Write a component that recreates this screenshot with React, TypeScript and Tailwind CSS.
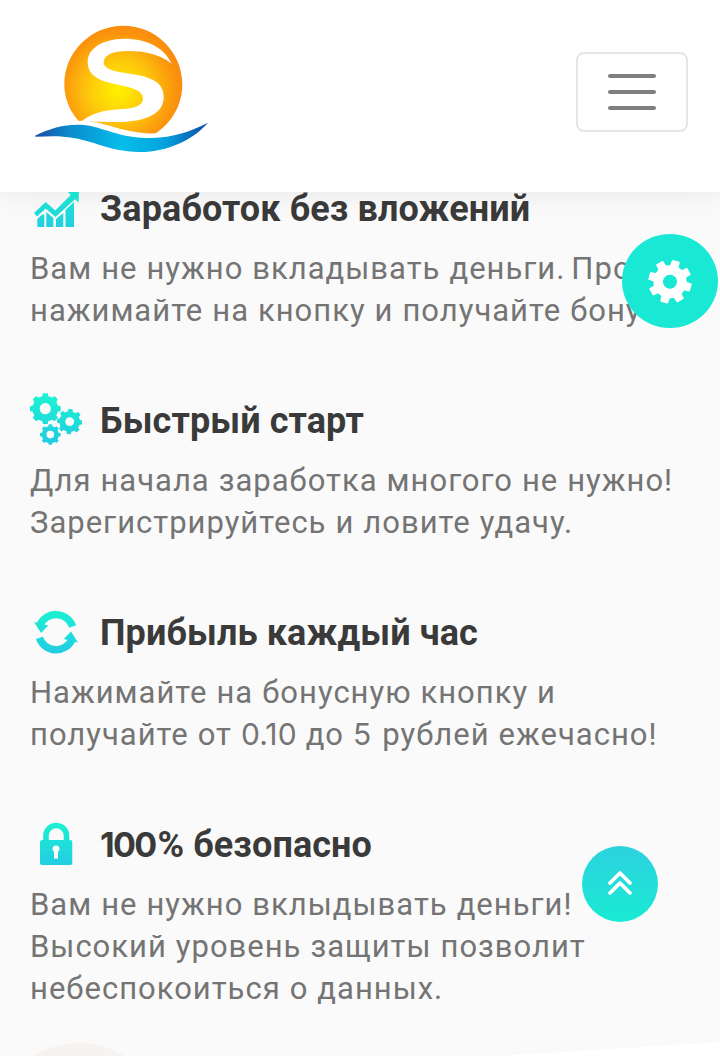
import React from 'react';

const gearPath = (cx: number, cy: number, outer: number, inner: number, turn = 0) => {
  const points: string[] = [];
  for (let i = 0; i < 8; i++) {
    const base = turn + i * 45;
    [
      [-13, inner],
      [-9, outer],
      [9, outer],
      [13, inner],
    ].forEach(([offset, radius]) => {
      const angle = ((base + offset - 90) * Math.PI) / 180;
      points.push(
        `${(cx + radius * Math.cos(angle)).toFixed(2)} ${(cy + radius * Math.sin(angle)).toFixed(2)}`
      );
    });
  }
  return `M${points.join('L')}Z`;
};

const holePath = (cx: number, cy: number, r: number) =>
  `M${cx - r} ${cy}a${r} ${r} 0 1 0 ${2 * r} 0a${r} ${r} 0 1 0 ${-2 * r} 0Z`;

const Logo = () => (
  <svg width="210" height="160" viewBox="0 0 630 480">
    <defs>
      <radialGradient id="sun" gradientUnits="userSpaceOnUse" cx="295" cy="240" r="200">
        <stop offset="0" stopColor="#fff200" />
        <stop offset="0.45" stopColor="#fdc80c" />
        <stop offset="0.85" stopColor="#fb940c" />
        <stop offset="1" stopColor="#f98a10" />
      </radialGradient>
      <linearGradient id="wave" x1="0" x2="1" y1="0" y2="0">
        <stop offset="0" stopColor="#1b4aa0" />
        <stop offset="0.2" stopColor="#0a8ccc" />
        <stop offset="0.5" stopColor="#06bdea" />
        <stop offset="0.75" stopColor="#05a3de" />
        <stop offset="1" stopColor="#0d4ba6" />
      </linearGradient>
    </defs>
    <path
      fill="url(#sun)"
      d="M176 333C148 302 133 264 133 223C133 126 212 47 310 47C408 47 487 126 487 223C487 284 456 338 407 370C350 372 300 356 235 338L188 332Z"
    />
    <path
      fill="#fff"
      d="M455 161C432 110 374 85 312 86C246 87 203 116 203 156C203 194 234 211 280 221C334 232 369 240 369 265C369 290 338 296 298 298C248 300 210 312 180 338C205 334 240 336 280 336C366 337 431 318 431 261C431 216 391 201 338 193C285 185 251 179 251 157C251 134 281 123 322 123C374 123 417 132 455 161Z"
    />
    <path
      fill="url(#wave)"
      d="M45 377C95 352 145 340 192 345C250 351 300 386 395 384C460 382 510 365 564 338C520 389 440 427 358 426C260 424 215 386 130 380C100 378 72 380 47 380Z"
    />
  </svg>
);

const IconGradient = ({ id }: { id: string }) => (
  <linearGradient id={id} gradientUnits="userSpaceOnUse" x1="0" y1="4" x2="0" y2="48">
    <stop offset="0" stopColor="#1bf2d2" />
    <stop offset="1" stopColor="#22cde2" />
  </linearGradient>
);

const ChartIcon = () => (
  <svg className="shrink-0" width="52" height="52" viewBox="0 0 52 52">
    <IconGradient id="chart" />
    <g fill="url(#chart)">
      <path d="M7.3 38l5-4.5 2 0V46H7.3ZM16.3 31l7 6V46h-7ZM26 38l7.3-6V46H26ZM35.5 29l8.5-8V46h-8.5Z" />
      <path d="M37 10L49 9.5L48.5 21.5L45 18.2 25.5 36 15.7 27.5 7 35.5 4 32 15.7 21 25.3 29.5 40.7 14Z" />
    </g>
  </svg>
);

const GearsIcon = () => (
  <svg className="shrink-0" width="52" height="52" viewBox="0 0 52 52">
    <IconGradient id="gears" />
    <g fill="url(#gears)" fillRule="evenodd">
      <path d={gearPath(15.3, 15.7, 15.6, 13) + holePath(15.3, 15.7, 5.6)} />
      <path d={gearPath(39.7, 28.6, 12.8, 10.4, 4) + holePath(39.7, 28.6, 4.4)} />
      <path d={gearPath(20.3, 41.6, 10.4, 8.6) + holePath(20.3, 41.6, 3.8)} />
    </g>
  </svg>
);

const RefreshIcon = () => (
  <svg className="shrink-0" width="52" height="52" viewBox="0 0 52 52">
    <IconGradient id="refresh" />
    <g fill="none" stroke="url(#refresh)" strokeWidth="7.4">
      <path d="M10 20A17.5 17.5 0 0 1 42.6 21.5" />
      <path d="M42 34.4A17.5 17.5 0 0 1 9.4 32.9" />
    </g>
    <g fill="url(#refresh)">
      <path d="M4 17L18.2 20.4 11 28Z" />
      <path d="M48 37.4L33.8 34 41 26.4Z" />
    </g>
  </svg>
);

const LockIcon = () => (
  <svg className="shrink-0" width="52" height="52" viewBox="0 0 52 52">
    <IconGradient id="lock" />
    <path
      d="M16 25V18.5A10.2 10 0 0 1 36.5 18.5V25"
      fill="none"
      stroke="url(#lock)"
      strokeWidth="5.6"
    />
    <path
      fill="url(#lock)"
      fillRule="evenodd"
      d="M12 23H40.5Q42.3 23 42.3 25V46Q42.3 48 40.5 48H12Q10 48 10 46V25Q10 23 12 23ZM24 34.8V41.6H28V34.8A3.5 3.5 0 1 0 24 34.8Z"
    />
  </svg>
);

type FeatureProps = {
  icon: React.ReactNode;
  title: React.ReactNode;
  children: React.ReactNode;
};

const Feature = ({ icon, title, children }: FeatureProps) => (
  <section className="mb-[61px]">
    <div className="flex h-[52px] items-center gap-[18px]">
      {icon}
      <h4 className="whitespace-nowrap pt-1 text-[36px] font-bold leading-[48px] tracking-[0.1px] text-[#3a3a3a]">
        {title}
      </h4>
    </div>
    <p className="mt-[15px] whitespace-nowrap text-[31px] leading-[42px] tracking-[1px] text-[#747474] [word-spacing:0.3px]">
      {children}
    </p>
  </section>
);

const App = () => {
  return (
    <div
      className="relative h-[1056px] w-[720px] overflow-hidden bg-[#fafafa]"
      style={{ fontFamily: 'Roboto, "Liberation Sans", sans-serif' }}
    >
      <header className="relative z-10 flex h-[192px] items-start justify-between bg-white pl-5 pr-8 pt-[10px] shadow-[0_0_30px_rgba(0,0,0,0.08)]">
        <Logo />
        <button
          className="mt-[42px] flex h-20 w-28 flex-col items-center justify-center gap-3 rounded-lg border-2 border-[#e5e5e5]"
          aria-label="Меню"
        >
          <span className="h-1 w-12 rounded-full bg-[#808080]" />
          <span className="h-1 w-12 rounded-full bg-[#808080]" />
          <span className="h-1 w-12 rounded-full bg-[#808080]" />
        </button>
      </header>

      <main className="-mt-[11px] pl-[30px]">
        <Feature icon={<ChartIcon />} title="Заработок без вложений">
          Вам не нужно вкладывать деньги<span className="tracking-[-2px]">.</span> Просто
          <br />
          нажимайте на кнопку и получайте бонус
        </Feature>
        <Feature icon={<GearsIcon />} title="Быстрый старт">
          Для начала заработка многого не нужно!
          <br />
          Зарегистрируйтесь и ловите удачу.
        </Feature>
        <Feature icon={<RefreshIcon />} title="Прибыль каждый час">
          Нажимайте на бонусную кнопку и
          <br />
          получайте от{' '}
          <span className="font-[Inter] text-[30px] leading-none tracking-[0.1px]">0.10</span> до{' '}
          <span className="font-[Inter] text-[30px] leading-none tracking-[2px]">5</span> рублей
          ежечасно!
        </Feature>
        <Feature
          icon={<LockIcon />}
          title={
            <>
              <span className="font-[Inter] text-[34px] leading-none tracking-[-1.7px]">100</span>
              <span className="ml-[2px] text-[36px] leading-none">%</span> безопасно
            </>
          }
        >
          Вам не нужно вклыдывать деньги!
          <br />
          Высокий уровень защиты позволит
          <br />
          небеспокоиться о данных.
        </Feature>
      </main>

      {/* floating controls */}
      <button
        className="absolute left-[622px] top-[234px] z-20 h-[94px] w-24 rounded-[50%] bg-[#19e8d5]"
        aria-label="Настройки"
      >
        <svg className="h-full w-full" viewBox="0 0 96 94">
          <path
            fill="#fff"
            stroke="#fff"
            strokeWidth="1.5"
            strokeLinejoin="round"
            fillRule="evenodd"
            d={gearPath(48, 47.7, 21.2, 16, 16) + holePath(48, 47.7, 7.8)}
          />
        </svg>
      </button>
      <button
        className="absolute left-[582px] top-[846px] z-20 h-[76px] w-[76px] rounded-full bg-linear-to-b from-[#2bd2df] to-[#18ead3]"
        aria-label="Наверх"
      >
        <svg className="h-full w-full" viewBox="0 0 76 76">
          <path
            d="M28 37L38 27L48 37M28 47L38 37L48 47"
            fill="none"
            stroke="#fff"
            strokeWidth="3.8"
            strokeLinecap="round"
            strokeLinejoin="round"
          />
        </svg>
      </button>

      {/* top edge of the next block */}
      <svg className="absolute bottom-0 left-0" width="720" height="16" viewBox="0 0 720 16">
        <circle cx="79" cy="91" r="88" fill="#f6f3f1" />
        <path d="M500 16L720 2V16Z" fill="#fff" />
      </svg>
    </div>
  );
};

export default App;
